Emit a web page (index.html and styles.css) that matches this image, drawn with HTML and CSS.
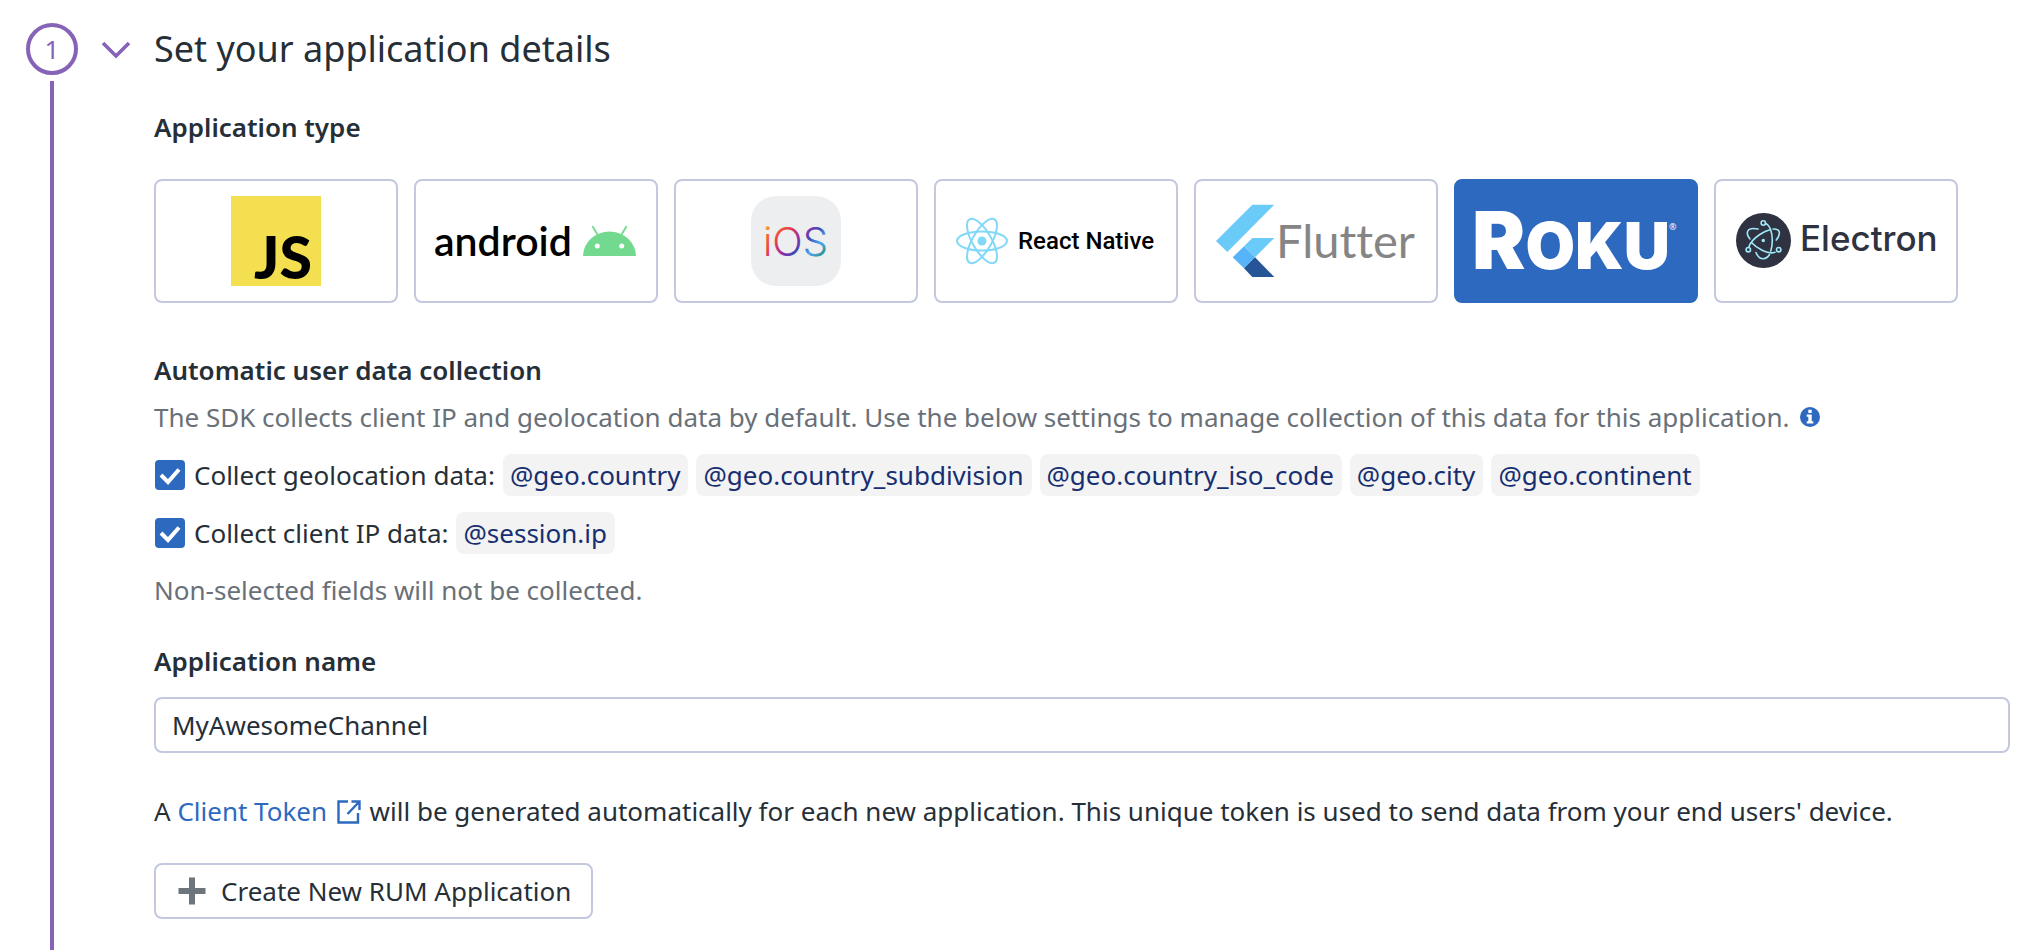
FILE: index.html
```html
<!DOCTYPE html>
<html lang="en">
<head>
<meta charset="utf-8">
<meta name="viewport" content="width=device-width, initial-scale=1">
<title>Set your application details</title>
<link rel="stylesheet" href="styles.css">
</head>
<body>
<main class="step">
  <div class="rail">
    <span class="rail-number">1</span>
    <span class="rail-line"></span>
  </div>
  <button class="toggle" type="button" aria-label="Collapse step" aria-expanded="true">
    <svg width="30" height="18" viewBox="0 0 30 18" fill="none" stroke="currentColor" stroke-width="3.600"><path d="M2 2l13 13L28 2"/></svg>
  </button>
  <div class="content">
    <h1 class="title">Set your application details</h1>

    <section class="group">
      <h2 class="heading">Application type</h2>
      <div class="platforms">
        <button class="platform" type="button" aria-label="JavaScript">
          <svg class="logo" viewBox="0 0 240 120">
            <rect x="75" y="15" width="90" height="90" fill="#f3df4f"/>
            <text class="logo-js" x="98" y="98">JS</text>
          </svg>
        </button>
        <button class="platform" type="button" aria-label="Android">
          <svg class="logo" viewBox="0 0 240 120">
            <text class="logo-android" x="18" y="75">android</text>
            <path d="M167 75a26.500 24.500 0 0 1 53 0z" fill="#73d98f"/>
            <path d="M176.800 45.800l6 10M210.200 45.800l-6 10" stroke="#73d98f" stroke-width="1.800" stroke-linecap="round"/>
            <circle cx="181.300" cy="65" r="2.500" fill="#fff"/><circle cx="205.700" cy="65" r="2.500" fill="#fff"/>
          </svg>
        </button>
        <button class="platform" type="button" aria-label="iOS">
          <svg class="logo" viewBox="0 0 240 120">
            <defs>
              <linearGradient id="ios" gradientUnits="userSpaceOnUse" x1="96" y1="36" x2="142" y2="82">
                <stop offset="0" stop-color="#fcc23c"/><stop offset=".14" stop-color="#f2682f"/><stop offset=".32" stop-color="#e93f4d"/><stop offset=".5" stop-color="#9a2ba8"/><stop offset=".64" stop-color="#3f48b5"/><stop offset=".8" stop-color="#4aa8f5"/><stop offset="1" stop-color="#2f8f74"/>
              </linearGradient>
            </defs>
            <rect x="75" y="15" width="90" height="90" rx="25" fill="#eceef0"/>
            <text class="logo-ios" x="87" y="75" fill="url(#ios)">iOS</text>
          </svg>
        </button>
        <button class="platform" type="button" aria-label="React Native">
          <svg class="logo" viewBox="0 0 240 120">
            <g fill="none" stroke="#83d8f7" stroke-width="2">
              <ellipse cx="46" cy="60" rx="25" ry="9.500"/>
              <ellipse cx="46" cy="60" rx="25" ry="9.500" transform="rotate(60 46 60)"/>
              <ellipse cx="46" cy="60" rx="25" ry="9.500" transform="rotate(120 46 60)"/>
            </g>
            <circle cx="46" cy="60" r="4.500" fill="#83d8f7"/>
            <text class="logo-react" x="82" y="68">React Native</text>
          </svg>
        </button>
        <button class="platform" type="button" aria-label="Flutter">
          <svg class="logo" viewBox="0 0 240 120">
            <path d="M56.300 23.700h22L31.300 71 20 60z" fill="#6bcbf8"/>
            <path d="M56.300 57h22L59 76.300 48 65.300z" fill="#6bcbf8"/>
            <path d="M48 65.300l11 11-11 11-11.300-11z" fill="#58b4f8"/>
            <path d="M59 76.300L78.300 96h-22L48 87.300z" fill="#255596"/>
            <text class="logo-flutter" x="80" y="77">Flutter</text>
          </svg>
        </button>
        <button class="platform platform-selected" type="button" aria-label="Roku" aria-pressed="true">
          <svg class="logo" viewBox="0 0 240 120">
            <text class="logo-roku" x="16" y="88"><tspan class="logo-roku-cap">R</tspan>OKU</text>
            <text class="logo-mark" x="213" y="49">®</text>
          </svg>
        </button>
        <button class="platform" type="button" aria-label="Electron">
          <svg class="logo" viewBox="0 0 240 120">
            <circle cx="47.500" cy="59.500" r="27.500" fill="#2f3241"/>
            <g fill="none" stroke="#9feaf9" stroke-width="1.600" stroke-linecap="round">
              <path d="M42 48c-5-1-9-.4-10.200 2-1 2-.3 5 2.200 8"/>
              <path d="M35.500 61.500c2.500 2.800 6.500 5.800 11 8 4.500 2.200 9 3 12.500 1.800"/>
              <path d="M49.500 42.500c4.500 1.500 6.800 9 6.800 17 0 4-.5 7.500-1.500 10.500"/>
              <path d="M32.800 66.500c.8-3.500 5-9 11-13 3.500-2.300 7-4 10.200-4.800"/>
              <path d="M57 48c3.200-.2 5.300.6 6 2.200 1 2.200-.2 5.500-2.700 8.800"/>
              <path d="M40 71.500c1.500 4 4 6.200 7.300 6.200 2.600 0 4.600-1.600 6.200-4.200"/>
              <circle cx="47.300" cy="42" r="2.200"/><circle cx="32.300" cy="68.700" r="2.200"/><circle cx="62.700" cy="68.700" r="2.200"/>
            </g>
            <circle cx="47.300" cy="59.500" r="1.700" fill="#9feaf9"/>
            <text class="logo-electron" x="84" y="70">Electron</text>
          </svg>
        </button>
      </div>
    </section>

    <section class="group">
      <h2 class="heading">Automatic user data collection</h2>
      <p class="note note-lead">The SDK collects client IP and geolocation data by default. Use the below settings to manage collection of this data for this application.
        <svg class="info" width="20" height="20" viewBox="0 0 20 20" role="img" aria-label="More information"><circle cx="10" cy="10" r="10" fill="#2d69bf"/><path d="M8.300 2.800h3.400v3.200H8.300zM6.700 7.500h5v6.800h1.600v2.200H6.700v-2.200h1.600V9.700H6.700z" fill="#fff"/></svg>
      </p>
      <div class="options">
        <div class="option">
          <input class="check" type="checkbox" id="geo" checked>
          <label for="geo">Collect geolocation data:</label>
          <span class="chips">
            <code class="chip">@geo.country</code>
            <code class="chip">@geo.country_subdivision</code>
            <code class="chip">@geo.country_iso_code</code>
            <code class="chip">@geo.city</code>
            <code class="chip">@geo.continent</code>
          </span>
        </div>
        <div class="option">
          <input class="check" type="checkbox" id="ip" checked>
          <label for="ip">Collect client IP data:</label>
          <span class="chips">
            <code class="chip">@session.ip</code>
          </span>
        </div>
      </div>
      <p class="note">Non-selected fields will not be collected.</p>
    </section>

    <section class="group group-name">
      <label class="heading" for="app-name">Application name</label>
      <input class="field" type="text" id="app-name" value="MyAwesomeChannel">
      <p class="token">A <a class="link" href="#client-token">Client Token <svg class="external" width="24" height="24" viewBox="0 0 24 24" fill="none" stroke="currentColor" stroke-width="2.400"><path d="M11 1.500H1.500V22.500h19.500V13M10.500 14L22.500 1.500M14.500 1.500h8v8.500"/></svg></a> will be generated automatically for each new application. This unique token is used to send data from your end users' device.</p>
      <button class="create" type="button">
        <svg width="28" height="28" viewBox="0 0 28 28" fill="#6c757b"><path d="M11 .5h6v10.500h10.500v6H17v10.500h-6V17H.5v-6H11z"/></svg>
        Create New RUM Application
      </button>
    </section>
  </div>
</main>
</body>
</html>
```
FILE: styles.css
```css
* {
  box-sizing: border-box;
}

body {
  margin: 0;
  background: #fff;
  color: #262f38;
  font: 26px/36px "Noto Sans", sans-serif;
}

h1,
h2,
p {
  margin: 0;
}

button,
input {
  font: inherit;
  color: inherit;
}

button {
  cursor: pointer;
}

.step {
  display: flex;
  min-height: 100vh;
  padding: 0 32px 0 26px;
}

.rail {
  display: flex;
  flex-direction: column;
  align-items: center;
  gap: 6px;
  padding-top: 23px;
  color: #8763b8;
}

.rail-number {
  display: flex;
  align-items: center;
  justify-content: center;
  width: 52px;
  height: 52px;
  border: 4px solid;
  border-radius: 50%;
}

.rail-line {
  flex: 1;
  width: 4px;
  background: currentColor;
}

.toggle {
  align-self: flex-start;
  display: flex;
  margin: 41px 23px 0;
  padding: 0;
  border: 0;
  background: none;
  color: #8763b8;
}

.content {
  flex: 1;
  min-width: 0;
  padding: 25px 0 31px;
}

.title {
  font-size: 36px;
  line-height: 48px;
  font-weight: 400;
}

.group {
  display: flex;
  flex-direction: column;
  align-items: flex-start;
  margin-top: 49px;
}

.title + .group {
  margin-top: 36px;
}

.group-name {
  margin-top: 35px;
}

.heading {
  font-size: 26px;
  line-height: 36px;
  font-weight: 600;
}

.platforms {
  display: grid;
  grid-template-columns: repeat(auto-fill, 244px);
  gap: 16px;
  width: 100%;
  margin-top: 34px;
}

.platform {
  display: block;
  padding: 0;
  border: 2px solid #c3c8de;
  border-radius: 8px;
  background: #fff;
}

.platform-selected {
  border-color: #2d69bf;
  background: #2d69bf;
}

.logo {
  display: block;
  width: 100%;
}

.logo-js {
  font: 900 59px Lato, sans-serif;
}

.logo-android {
  font: 600 41px Lato, sans-serif;
}

.logo-ios {
  font: 300 40px Inter, sans-serif;
}

.logo-react {
  font: 500 24px Roboto, sans-serif;
}

.logo-flutter {
  font: 400 47px Lato, sans-serif;
  font-variant-ligatures: none;
  fill: #858585;
}

.logo-roku {
  font: 900 64px Inter, sans-serif;
  fill: #fff;
}

.logo-roku-cap {
  font-size: 80px;
}

.logo-mark {
  font: 400 9px "Noto Sans", sans-serif;
  fill: #fff;
}

.logo-electron {
  font: 500 35px Inter, sans-serif;
  fill: #2f3241;
}

.note {
  color: #697077;
}

.note-lead {
  margin-top: 11px;
}

.info {
  margin-left: 4px;
}

.options {
  display: flex;
  flex-direction: column;
  gap: 16px;
  margin: 19px 0 18px;
}

.option {
  display: flex;
  align-items: center;
  gap: 8px;
}

.chips {
  display: flex;
  flex-wrap: wrap;
  gap: 8px;
}

.check {
  appearance: none;
  width: 30px;
  height: 30px;
  margin: 0 1px;
  border-radius: 4px;
  background: #fff;
  border: 2px solid #c3c8de;
}

.check:checked {
  border: 0;
  background: #2d69bf url("data:image/svg+xml,%3Csvg xmlns='http://www.w3.org/2000/svg' viewBox='0 0 30 30' fill='none' stroke='white' stroke-width='4'%3E%3Cpath d='M6 15l7 7L24 9.500'/%3E%3C/svg%3E");
}

.chip {
  padding: 3px 8px 3px 7px;
  border-radius: 8px;
  background: #f3f3f4;
  color: #172f70;
  font-family: inherit;
}

.field {
  width: 100%;
  height: 56px;
  margin-top: 18px;
  padding: 0 16px;
  border: 2px solid #c3c8de;
  border-radius: 8px;
  background: #fff;
}

.token {
  margin-top: 40px;
}

.link {
  color: #2d69bf;
  text-decoration: none;
}

.external {
  margin: 0 2px 0 3px;
  vertical-align: -3px;
}

.create {
  display: flex;
  align-items: center;
  gap: 15px;
  height: 56px;
  margin-top: 34px;
  padding: 0 20px 0 22px;
  border: 2px solid #c3c8de;
  border-radius: 8px;
  background: #fff;
}
```
